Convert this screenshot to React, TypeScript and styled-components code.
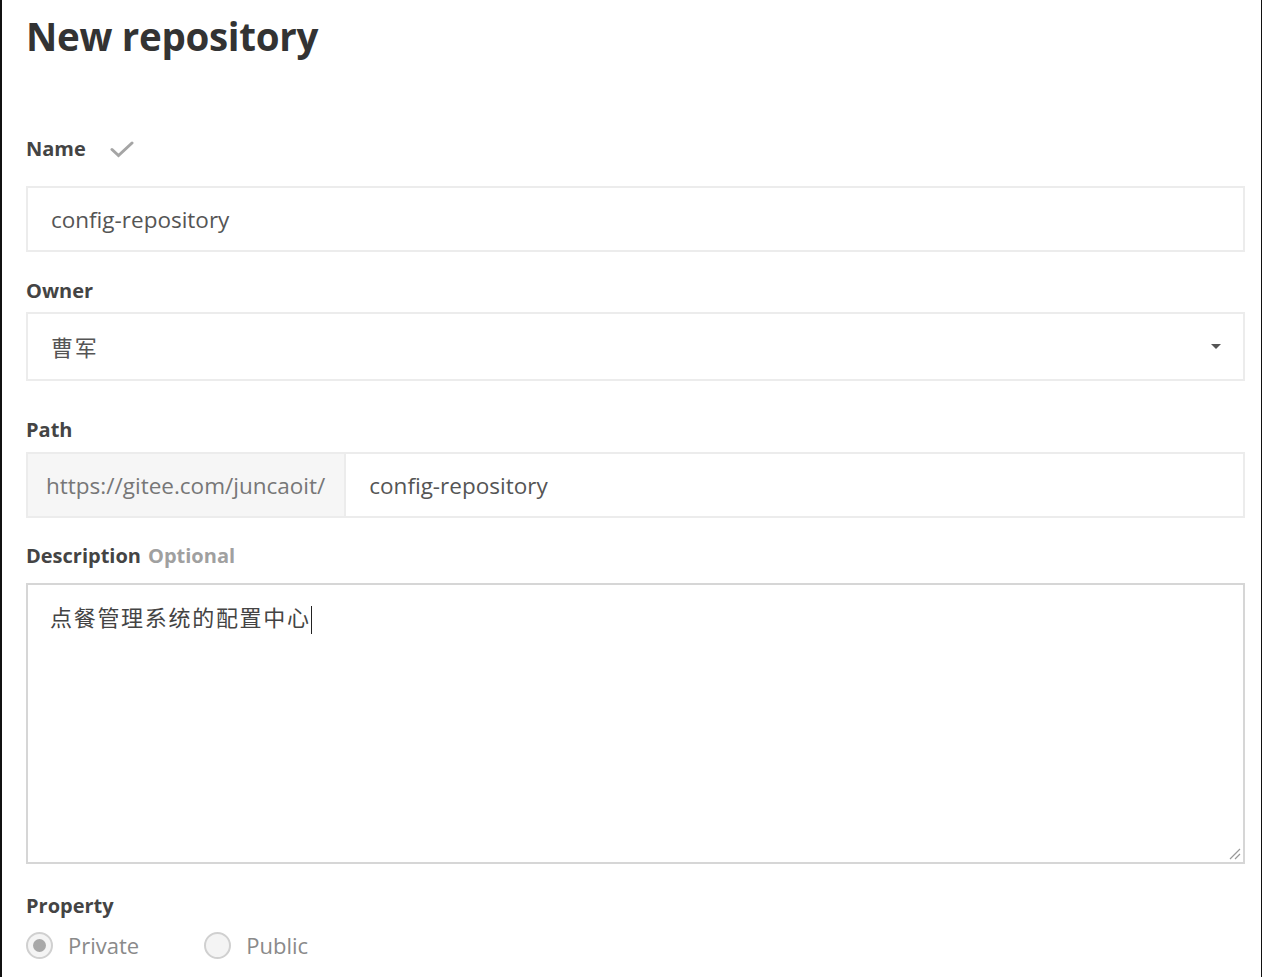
import React from "react";
import styled, { createGlobalStyle } from "styled-components";

const GlobalStyle = createGlobalStyle`
  html, body {
    margin: 0;
    padding: 0;
    background: #ffffff;
  }
  body {
    font-family: "Open Sans", "Noto Sans", "Noto Sans CJK SC", sans-serif;
    color: #333;
  }
`;

/* css */
const Frame = styled.div`
  box-sizing: border-box;
  width: 1262px;
  height: 977px;
  border-left: 2px solid #111;
  border-right: 1px solid #111;
  padding: 12px 16px 0 24px;
  overflow: hidden;
`;

const Title = styled.h1`
  margin: 0;
  font-size: 38.5px;
  line-height: 48px;
  font-weight: 700;
  color: #333;
  letter-spacing: -0.3px;
`;

const Label = styled.div<{ $top: number; $bottom: number }>`
  display: flex;
  align-items: center;
  gap: 24px;
  margin-top: ${(p) => p.$top}px;
  margin-bottom: ${(p) => p.$bottom}px;
  font-size: 20px;
  line-height: 24px;
  font-weight: 700;
  color: #444;
`;

const Muted = styled.span`
  color: #a0a0a0;
  margin-left: 7px;
`;

const Box = styled.div<{ $height: number }>`
  box-sizing: border-box;
  display: flex;
  align-items: center;
  height: ${(p) => p.$height}px;
  border: 2px solid #ececec;
  background: #fff;
  font-size: 22.5px;
  color: #555;
`;

const Value = styled.div`
  flex: 1;
  padding-left: 23px;
`;

const Cjk = styled.span`
  font-family: "Noto Sans CJK SC", sans-serif;
  font-size: 22px;
  letter-spacing: 1.7px;
`;

const Caret = styled.div`
  width: 0;
  height: 0;
  margin-right: 22px;
  border-left: 5px solid transparent;
  border-right: 5px solid transparent;
  border-top: 5px solid #555;
`;

const Addon = styled.div`
  box-sizing: border-box;
  display: flex;
  align-items: center;
  height: 100%;
  padding: 0 19px 0 18px;
  background: #f6f6f6;
  border-right: 2px solid #ececec;
  color: #777;
`;

const TextArea = styled.div`
  position: relative;
  box-sizing: border-box;
  height: 281px;
  border: 2px solid #d6d6d6;
  padding: 16px 22px;
  font-size: 22px;
  line-height: 30px;
  color: #444;
`;

const TextCaret = styled.span`
  display: inline-block;
  width: 1px;
  height: 28px;
  background: #222;
  vertical-align: middle;
  margin-left: 0;
`;

const Grip = styled.svg`
  position: absolute;
  right: 2px;
  bottom: 2px;
`;

const RadioRow = styled.div`
  display: flex;
  align-items: center;
  gap: 65px;
  height: 26px;
`;

const RadioItem = styled.label`
  display: flex;
  align-items: center;
  gap: 15px;
  font-size: 22px;
  color: #8a8a8a;
`;

const Circle = styled.span<{ $checked?: boolean }>`
  box-sizing: border-box;
  display: flex;
  align-items: center;
  justify-content: center;
  width: 27px;
  height: 27px;
  border-radius: 50%;
  border: 2px solid #d0d0d0;
  background: #f4f4f4;
  &::after {
    content: "";
    display: ${(p) => (p.$checked ? "block" : "none")};
    width: 13px;
    height: 13px;
    border-radius: 50%;
    background: #a8a8a8;
  }
`;
/* css */

function App() {
  return (
    <>
      <GlobalStyle />
      <Frame>
        <Title>New repository</Title>

        <Label $top={77} $bottom={25}>
          Name
          <svg width="24" height="18" viewBox="0 0 24 18">
            <path d="M2 9.5 L8.5 15.5 L22 3" fill="none" stroke="#a5a5a5" strokeWidth="3" strokeLinecap="round" />
          </svg>
        </Label>
        <Box $height={66}>
          <Value>config-repository</Value>
        </Box>

        <Label $top={27} $bottom={9}>Owner</Label>
        <Box $height={69}>
          <Value>
            <Cjk>曹军</Cjk>
          </Value>
          <Caret />
        </Box>

        <Label $top={37} $bottom={10}>Path</Label>
        <Box $height={66}>
          <Addon>https://gitee.com/juncaoit/</Addon>
          <Value>config-repository</Value>
        </Box>

        <Label $top={26} $bottom={15}>
          <span>
            Description<Muted>Optional</Muted>
          </span>
        </Label>
        <TextArea>
          <Cjk>点餐管理系统的配置中心</Cjk>
          <TextCaret />
          <Grip width="14" height="14" viewBox="0 0 14 14">
            <path d="M13 3 L3 13 M13 8 L8 13" stroke="#999" strokeWidth="1.2" />
          </Grip>
        </TextArea>

        <Label $top={30} $bottom={14}>Property</Label>
        <RadioRow>
          <RadioItem>
            <Circle $checked />
            Private
          </RadioItem>
          <RadioItem>
            <Circle />
            Public
          </RadioItem>
        </RadioRow>
      </Frame>
    </>
  );
}

export default App;
